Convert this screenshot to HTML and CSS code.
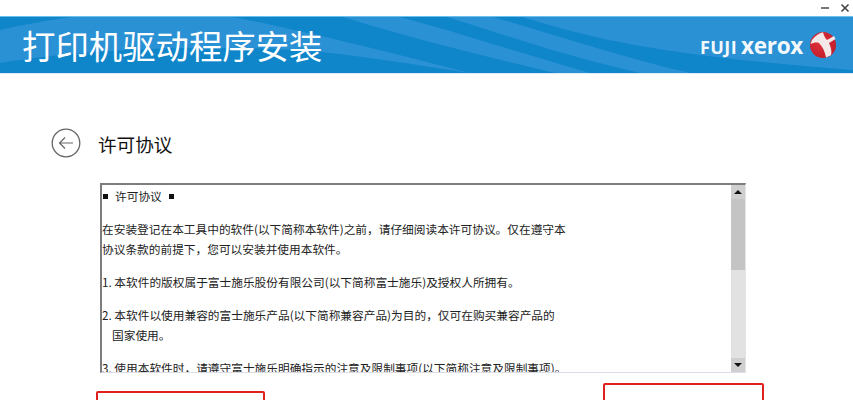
FILE: index.html
```html
<!DOCTYPE html>
<html lang="zh-CN">

<head>
    <meta charset="UTF-8">
    <title>打印机驱动程序安装</title>
    <link rel="stylesheet" href="styles.css">
</head>

<body>
    <div class="window">
        <div class="titlebar">
            <svg class="win-icon" width="10" height="10" viewBox="0 0 10 10">
                <path d="M1 5h8" stroke="#555" stroke-width="1.6" />
            </svg>
            <svg class="win-icon" width="10" height="10" viewBox="0 0 10 10">
                <path d="M1.5 1.5l7 7M8.5 1.5l-7 7" stroke="#444" stroke-width="1.6" />
            </svg>
        </div>

        <header class="banner">
            <svg class="waves" width="853" height="56" viewBox="0 0 853 56">
                <path d="M0 0H70C45 4 20 8 0 13Z" fill="#0f85ca" />
                <path d="M233 0H343C400 18 470 36 555 56H470C400 38 310 15 233 0Z" fill="#0f85ca" />
                <path d="M400 0H447C500 16 560 38 640 56H590C520 36 460 16 400 0Z" fill="#0f85ca" />
                <path d="M493 0H523C580 18 650 38 853 53V56H690C620 40 550 16 493 0Z" fill="#0f85ca" />
                <path d="M0 46C80 32 220 26 320 35C370 40 430 50 470 56H0Z" fill="#0f85ca" />
            </svg>
            <h1 class="banner-title">打印机驱动程序安装</h1>
            <div class="logo">
                <div class="logo-text"><span class="logo-fuji">FUJI</span><span class="logo-xerox">xerox</span></div>
                <svg width="26" height="26" viewBox="0 0 26 26">
                    <defs>
                        <radialGradient id="ball" cx="40%" cy="40%" r="70%">
                            <stop offset="0" stop-color="#e2323c" />
                            <stop offset="1" stop-color="#bd1c28" />
                        </radialGradient>
                    </defs>
                    <circle cx="13" cy="13" r="13" fill="url(#ball)" />
                    <path d="M2 8C5 4 9 1 13 0.2C14 4 15 6 17 8L24 4L25.5 7L19 11C21 15 22 20 21 23.2L16 25.6C15 20 13 15 9 11C6 10 3 11 0.6 12Z" fill="#f5e8e8" />
                </svg>
            </div>
        </header>

        <main class="content">
            <div class="page-head">
                <svg width="30" height="30" viewBox="0 0 30 30">
                    <circle cx="15" cy="15" r="13.8" fill="none" stroke="#666" stroke-width="1.3" />
                    <path d="M22 15H8.5M14 9.5L8.5 15L14 20.5" fill="none" stroke="#666" stroke-width="1.2" />
                </svg>
                <h2 class="page-title">许可协议</h2>
            </div>

            <div class="license">
                <div class="license-text">
                    <p class="license-head"><span class="square"></span>许可协议<span class="square"></span></p>
                    <p>在安装登记在本工具中的软件(以下简称本软件)之前，请仔细阅读本许可协议。仅在遵守本<br>协议条款的前提下，您可以安装并使用本软件。</p>
                    <p>1. 本软件的版权属于富士施乐股份有限公司(以下简称富士施乐)及授权人所拥有。</p>
                    <p>2. 本软件以使用兼容的富士施乐产品(以下简称兼容产品)为目的，仅可在购买兼容产品的<br><span class="indent">国家使用。</span></p>
                    <p>3. 使用本软件时，请遵守富士施乐明确指示的注意及限制事项(以下简称注意及限制事项)。</p>
                </div>
                <div class="scrollbar">
                    <div class="scroll-btn"><span class="arrow-up"></span></div>
                    <div class="scroll-track">
                        <div class="scroll-thumb"></div>
                    </div>
                    <div class="scroll-btn"><span class="arrow-down"></span></div>
                </div>
            </div>
        </main>

        <div class="mark mark-left"></div>
        <div class="mark mark-right"></div>
    </div>
</body>
</html>
```

FILE: styles.css
```css
* {
    box-sizing: border-box;
}

body {
    margin: 0;
    overflow: hidden;
    background: #fff;
    font-family: "Noto Sans CJK SC", "Liberation Sans", sans-serif;
}

.window {
    position: relative;
    width: 853px;
    height: 400px;
    overflow: hidden;
}

.titlebar {
    display: flex;
    justify-content: flex-end;
    gap: 10px;
    height: 16px;
    padding: 3px 3px 0 0;
}

.banner {
    position: relative;
    display: flex;
    align-items: center;
    justify-content: space-between;
    height: 58px;
    padding: 0 17px 0 22px;
    background: #2b91d5;
    border-top: 1px solid #6cc0ee;
    border-bottom: 1px solid #dbeaf5;
}

.waves {
    position: absolute;
    top: 0;
    left: 0;
}

.banner-title {
    position: relative;
    margin: 0;
    font-size: 33.4px;
    font-weight: 400;
    line-height: 56px;
    color: #fff;
}

.logo {
    position: relative;
    display: flex;
    align-items: center;
    gap: 7px;
}

.logo-text {
    display: flex;
    align-items: baseline;
    gap: 4px;
    font-family: "Open Sans", "Liberation Sans", sans-serif;
    font-weight: 700;
    color: #f2f8fc;
}

.logo-fuji {
    font-size: 18px;
    letter-spacing: 0.4px;
}

.logo-xerox {
    font-size: 22.5px;
    letter-spacing: -0.3px;
}

.content {
    padding: 54px 107px 0 51px;
}

.page-head {
    display: flex;
    align-items: center;
    gap: 17px;
    height: 30px;
}

.page-title {
    margin: 0;
    font-size: 18.6px;
    font-weight: 400;
    color: #111;
}

.license {
    display: flex;
    height: 190px;
    margin: 25px 0 0 49px;
    border-top: 2px solid #7d7d7d;
    border-left: 2px solid #7d7d7d;
    border-bottom: 1px solid #dcdce6;
    border-right: 1px solid #e4e4e4;
}

.license-text {
    flex: 1;
    overflow: hidden;
    padding-top: 1px;
    font-size: 11.7px;
    line-height: 20px;
    color: #222;
}

.license-text p {
    margin: 0 0 13px;
}

.license-text .license-head {
    display: flex;
    align-items: center;
    gap: 7px;
    padding-left: 1px;
}

.square {
    width: 5px;
    height: 5px;
    background: #111;
}

.indent {
    padding-left: 10px;
}

.scrollbar {
    display: flex;
    flex-direction: column;
    width: 14px;
    background: #e2e2e2;
}

.scroll-btn {
    display: flex;
    align-items: center;
    justify-content: center;
    height: 14px;
    background: #cfcfcf;
}

.scroll-track {
    flex: 1;
}

.scroll-thumb {
    height: 71px;
    background: #c4c4c4;
}

.arrow-up,
.arrow-down {
    width: 0;
    height: 0;
    border-left: 4px solid transparent;
    border-right: 4px solid transparent;
}

.arrow-up {
    border-bottom: 4px solid #111;
}

.arrow-down {
    border-top: 4px solid #111;
}

/* red annotation boxes drawn on top of the screenshot */
.mark {
    position: absolute;
    border: 2px solid #e0201c;
    border-radius: 2px;
}

.mark-left {
    top: 391px;
    left: 96px;
    width: 169px;
    height: 30px;
}

.mark-right {
    top: 383px;
    left: 603px;
    width: 161px;
    height: 40px;
}
```
